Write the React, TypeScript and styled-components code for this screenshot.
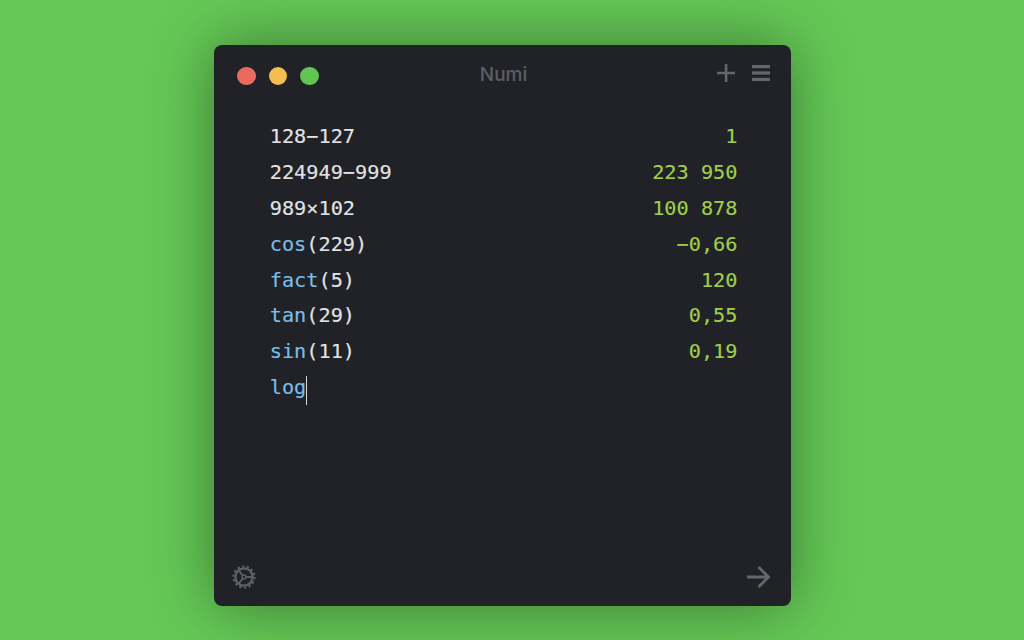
import styled, { createGlobalStyle } from "styled-components";

const rows = [
  { fn: "", expr: "128−127", result: "1" },
  { fn: "", expr: "224949−999", result: "223 950" },
  { fn: "", expr: "989×102", result: "100 878" },
  { fn: "cos", expr: "(229)", result: "−0,66" },
  { fn: "fact", expr: "(5)", result: "120" },
  { fn: "tan", expr: "(29)", result: "0,55" },
  { fn: "sin", expr: "(11)", result: "0,19" },
];

const GearIcon = () => (
  <svg width="26" height="26" viewBox="0 0 26 26" fill="none" stroke="#5f6064">
    <circle cx="13" cy="13" r="8.6" strokeWidth="2.4" />
    <circle cx="13" cy="13" r="10.6" strokeWidth="2" strokeDasharray="2.38 2.38" />
    <circle cx="13" cy="13" r="1.9" strokeWidth="1.5" />
    <path d="M11.7 11.5 7.800 6.400M11.7 14.500 7.800 19.600M15.200 13H22" strokeWidth="1.8" />
  </svg>
);

const App = () => {
  return (
    <>
      <GlobalStyle />
      <Page>
        <Window>
          <TitleBar>
            <Lights>
              <Light color="#ea6a60" />
              <Light color="#f4bd4f" />
              <Light color="#61c554" />
            </Lights>
            <Title>Numi</Title>
            <Tools>
              <svg width="20" height="20" viewBox="0 0 20 20" fill="#66676b">
                <path d="M8.800 1h2.600v7.700H19v2.600h-7.600V19H8.800v-7.700H1V8.700h7.800z" />
              </svg>
              <svg width="20" height="18" viewBox="0 0 20 18" fill="#66676b">
                <rect x="1" y="1" width="18" height="3.200" />
                <rect x="1" y="7.400" width="18" height="3.200" />
                <rect x="1" y="13.800" width="18" height="3.200" />
              </svg>
            </Tools>
          </TitleBar>
          <Sheet>
            {rows.map((row) => (
              <Row key={row.expr}>
                <Expr>
                  {row.fn && <Fn>{row.fn}</Fn>}
                  {row.expr}
                </Expr>
                <Result>{row.result}</Result>
              </Row>
            ))}
            <Row>
              <Expr>
                <Fn>log</Fn>
                <Caret />
              </Expr>
            </Row>
          </Sheet>
          <Footer>
            <GearIcon />
            <svg width="26" height="24" viewBox="0 0 26 24" fill="none" stroke="#66676b" strokeWidth="2.800">
              <path d="M2 12h21M13.500 2 23.500 12 13.500 22" />
            </svg>
          </Footer>
        </Window>
      </Page>
    </>
  );
};

const GlobalStyle = createGlobalStyle`
  html, body {
    margin: 0;
    padding: 0;
    background: #65c956;
  }
`;

const Page = styled.div`
  box-sizing: border-box;
  width: 1024px;
  height: 640px;
  overflow: hidden;
  padding: 45px 0 0 214px;
  background: #65c956;
`;

const Window = styled.div`
  box-sizing: border-box;
  width: 577px;
  height: 561px;
  display: flex;
  flex-direction: column;
  background: #212227;
  border-radius: 8px;
  box-shadow: 0 0 64px rgba(0, 0, 0, 0.42);
`;

const TitleBar = styled.div`
  position: relative;
  display: flex;
  align-items: center;
  justify-content: space-between;
  height: 58px;
  padding: 0 20px 0 23px;
`;

const Lights = styled.div`
  display: flex;
  gap: 13px;
  margin-top: 4px;
`;

const Light = styled.span<{ color: string }>`
  width: 18.500px;
  height: 18.500px;
  border-radius: 50%;
  background: ${({ color }) => color};
`;

const Title = styled.div`
  position: absolute;
  left: 0;
  right: 0;
  text-align: center;
  padding-left: 2px;
  font-family: "Inter", "Liberation Sans", sans-serif;
  font-size: 19px;
  font-weight: 500;
  color: #5d5e62;
`;

const Tools = styled.div`
  display: flex;
  align-items: center;
  gap: 15px;
  margin-top: -3px;
`;

const Sheet = styled.div`
  flex: 1;
  padding: 16px 53.500px 0 56px;
  margin-left: -0.300px;
  font-family: "DejaVu Sans Mono", monospace;
  font-size: 20.250px;
  -webkit-text-stroke: 0.15px currentColor;
`;

const Row = styled.div`
  display: flex;
  justify-content: space-between;
  height: 35.900px;
  line-height: 35.900px;
`;

const Expr = styled.div`
  color: #e2e2e4;
`;

const Fn = styled.span`
  color: #79bee6;
`;

const Result = styled.div`
  color: #a0cd4b;
  white-space: pre;
`;

const Caret = styled.span`
  display: inline-block;
  width: 1px;
  height: 29px;
  vertical-align: -11px;
  background: #d8d8da;
`;

const Footer = styled.div`
  display: flex;
  align-items: center;
  justify-content: space-between;
  padding: 0 20px 16px 17px;
`;

export default App;
